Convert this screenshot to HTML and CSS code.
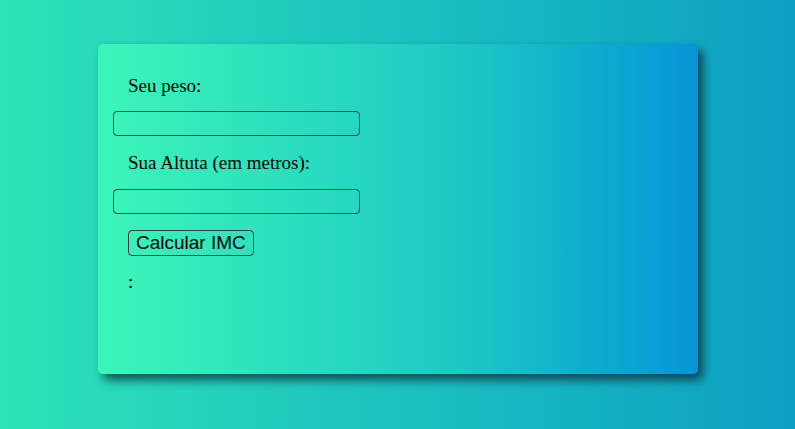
FILE: index.html
```html
<!DOCTYPE html>
<html lang="pt">
<head>
<meta charset="utf-8">
<title>Calculadora IMC</title>
<link rel="stylesheet" href="styles.css">
</head>
<body>
<main class="card">
  <label class="label" for="peso">Seu peso:</label>
  <input class="field" id="peso" type="text">
  <label class="label" for="altura">Sua Altuta (em metros):</label>
  <input class="field field-second" id="altura" type="text">
  <div class="row"><button class="btn" type="button">Calcular IMC</button></div>
  <p class="result">:</p>
</main>
</body>
</html>
```
FILE: styles.css
```css
html, body {
  margin: 0;
  height: 100%;
}
body {
  background: linear-gradient(to right, #2de3b7 0%, #1bc2c0 50%, #0d9fc3 100%);
  font-family: "Liberation Serif", "Times New Roman", serif;
  font-size: 19px;
  color: #000;
  padding-top: 44px;
  box-sizing: border-box;
}
.card {
  width: 600px;
  height: 330px;
  margin: 0 0 0 98px;
  box-sizing: border-box;
  padding: 31px 0 0 15px;
  border-radius: 5px;
  background: linear-gradient(to right, #3cf6b8 0%, #1cc9c4 60%, #0595d7 100%);
  box-shadow: 5px 6px 10px rgba(10, 40, 50, 0.75);
  display: flex;
  flex-direction: column;
  align-items: flex-start;
}
.label {
  display: block;
  margin-left: 15px;
  line-height: 22px;
}
.field {
  width: 247px;
  height: 25px;
  box-sizing: border-box;
  margin: 14px 0 16px 0;
  border: 1px solid #3a3a44;
  border-radius: 4px;
  background: transparent;
  outline: none;
}
.field-second {
  margin-top: 15px;
}
.row {
  margin-left: 15px;
}
.btn {
  height: 26px;
  box-sizing: border-box;
  padding: 0 7px;
  border: 1px solid #3a3a44;
  border-radius: 4px;
  background: transparent;
  font-family: "Liberation Sans", Arial, sans-serif;
  font-size: 19px;
  color: #000;
  line-height: 22px;
}
.result {
  margin: 15px 0 0 15px;
  line-height: 22px;
}
```
